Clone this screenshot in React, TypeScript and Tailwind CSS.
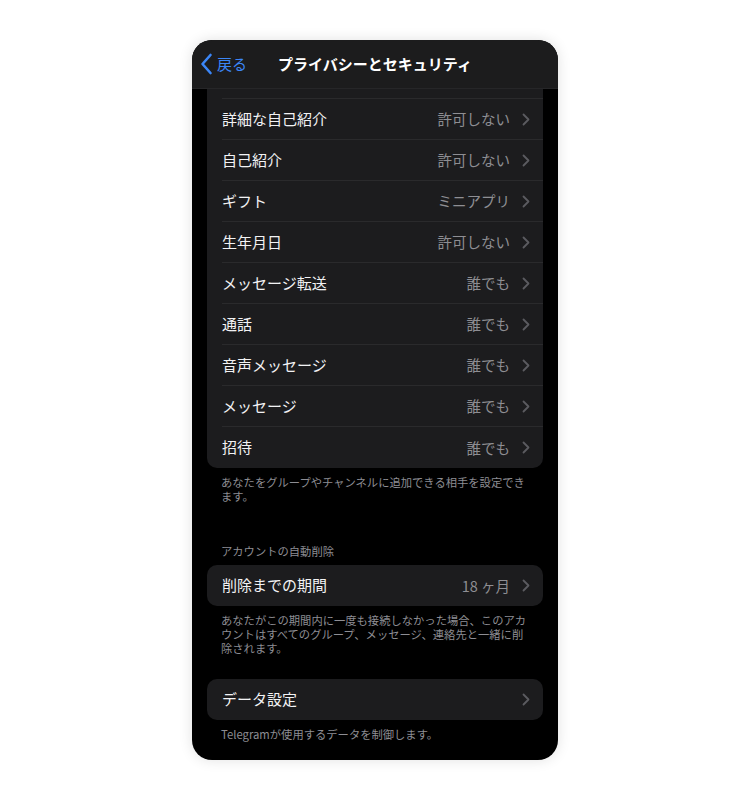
import React from "react";

const font = { fontFamily: '"Noto Sans CJK JP", "Noto Sans", sans-serif' };

function Chevron() {
  return (
    <svg width="8" height="13" viewBox="0 0 8 13" className="ml-[12px] shrink-0">
      <path d="M1.5 1.5 L6.5 6.5 L1.5 11.5" fill="none" stroke="#5b5b60" strokeWidth="1.8" strokeLinecap="round" strokeLinejoin="round" />
    </svg>
  );
}

function Row({ label, value, last }: { label: string; value?: string; last?: boolean }) {
  return (
    <div className="flex h-[41px] items-stretch pl-[15px]">
      <div className={`flex flex-1 items-center pr-[13px] ${last ? "" : "border-b border-[#2a2a2c]"}`}>
        <span className="flex-1 text-[15px] text-[#f2f2f4]">{label}</span>
        {value && <span className="text-[14.5px] text-[#8e8e93]">{value}</span>}
        <Chevron />
      </div>
    </div>
  );
}

const rows: [string, string][] = [
  ["詳細な自己紹介", "許可しない"],
  ["自己紹介", "許可しない"],
  ["ギフト", "ミニアプリ"],
  ["生年月日", "許可しない"],
  ["メッセージ転送", "誰でも"],
  ["通話", "誰でも"],
  ["音声メッセージ", "誰でも"],
  ["メッセージ", "誰でも"],
  ["招待", "誰でも"],
];

export default function App() {
  return (
    <div className="min-h-[800px] bg-white pt-[40px]" style={font}>
      <div className="mx-auto flex h-[720px] w-[366px] flex-col overflow-hidden rounded-[20px] bg-black shadow-[0_0_14px_rgba(0,0,0,0.12)]">
        <div className="relative flex h-[49px] shrink-0 items-center justify-center border-b border-[#262628] bg-[#1c1c1d]">
          <div className="absolute left-[8px] top-0 flex h-full items-center">
            <svg width="13" height="22" viewBox="0 0 13 22">
              <path d="M10.5 2 L2.5 11 L10.5 20" fill="none" stroke="#3b86f7" strokeWidth="2.6" strokeLinecap="round" strokeLinejoin="round" />
            </svg>
            <span className="ml-[4px] text-[15px] text-[#3b86f7]">戻る</span>
          </div>
          <span className="text-[15px] font-bold text-white">プライバシーとセキュリティ</span>
        </div>
        <div className="flex flex-col px-[15px]">
          <div className="overflow-hidden rounded-b-[10px] bg-[#1c1c1e]">
            <div className="h-[10px] pl-[15px]">
              <div className="h-full border-b border-[#2a2a2c]" />
            </div>
            {rows.map(([l, v], i) => (
              <Row key={l} label={l} value={v} last={i === rows.length - 1} />
            ))}
          </div>
          <p className="px-[14px] pt-[7px] text-[11.3px] leading-[14px] text-[#8d8d93]">
            あなたをグループやチャンネルに追加できる相手を設定できます。
          </p>
          <p className="mt-[41px] px-[14px] text-[11.3px] leading-[14px] text-[#8d8d93]">アカウントの自動削除</p>
          <div className="mt-[7px] overflow-hidden rounded-[10px] bg-[#1c1c1e]">
            <Row label="削除までの期間" value="18 ヶ月" last />
          </div>
          <p className="px-[14px] pt-[7px] text-[11.3px] leading-[14px] text-[#8d8d93]">
            あなたがこの期間内に一度も接続しなかった場合、このアカウントはすべてのグループ、メッセージ、連絡先と一緒に削除されます。
          </p>
          <div className="mt-[24px] overflow-hidden rounded-[10px] bg-[#1c1c1e]">
            <Row label="データ設定" last />
          </div>
          <p className="px-[14px] pt-[7px] text-[11.3px] leading-[14px] text-[#8d8d93]">
            Telegramが使用するデータを制御します。
          </p>
        </div>
      </div>
    </div>
  );
}
